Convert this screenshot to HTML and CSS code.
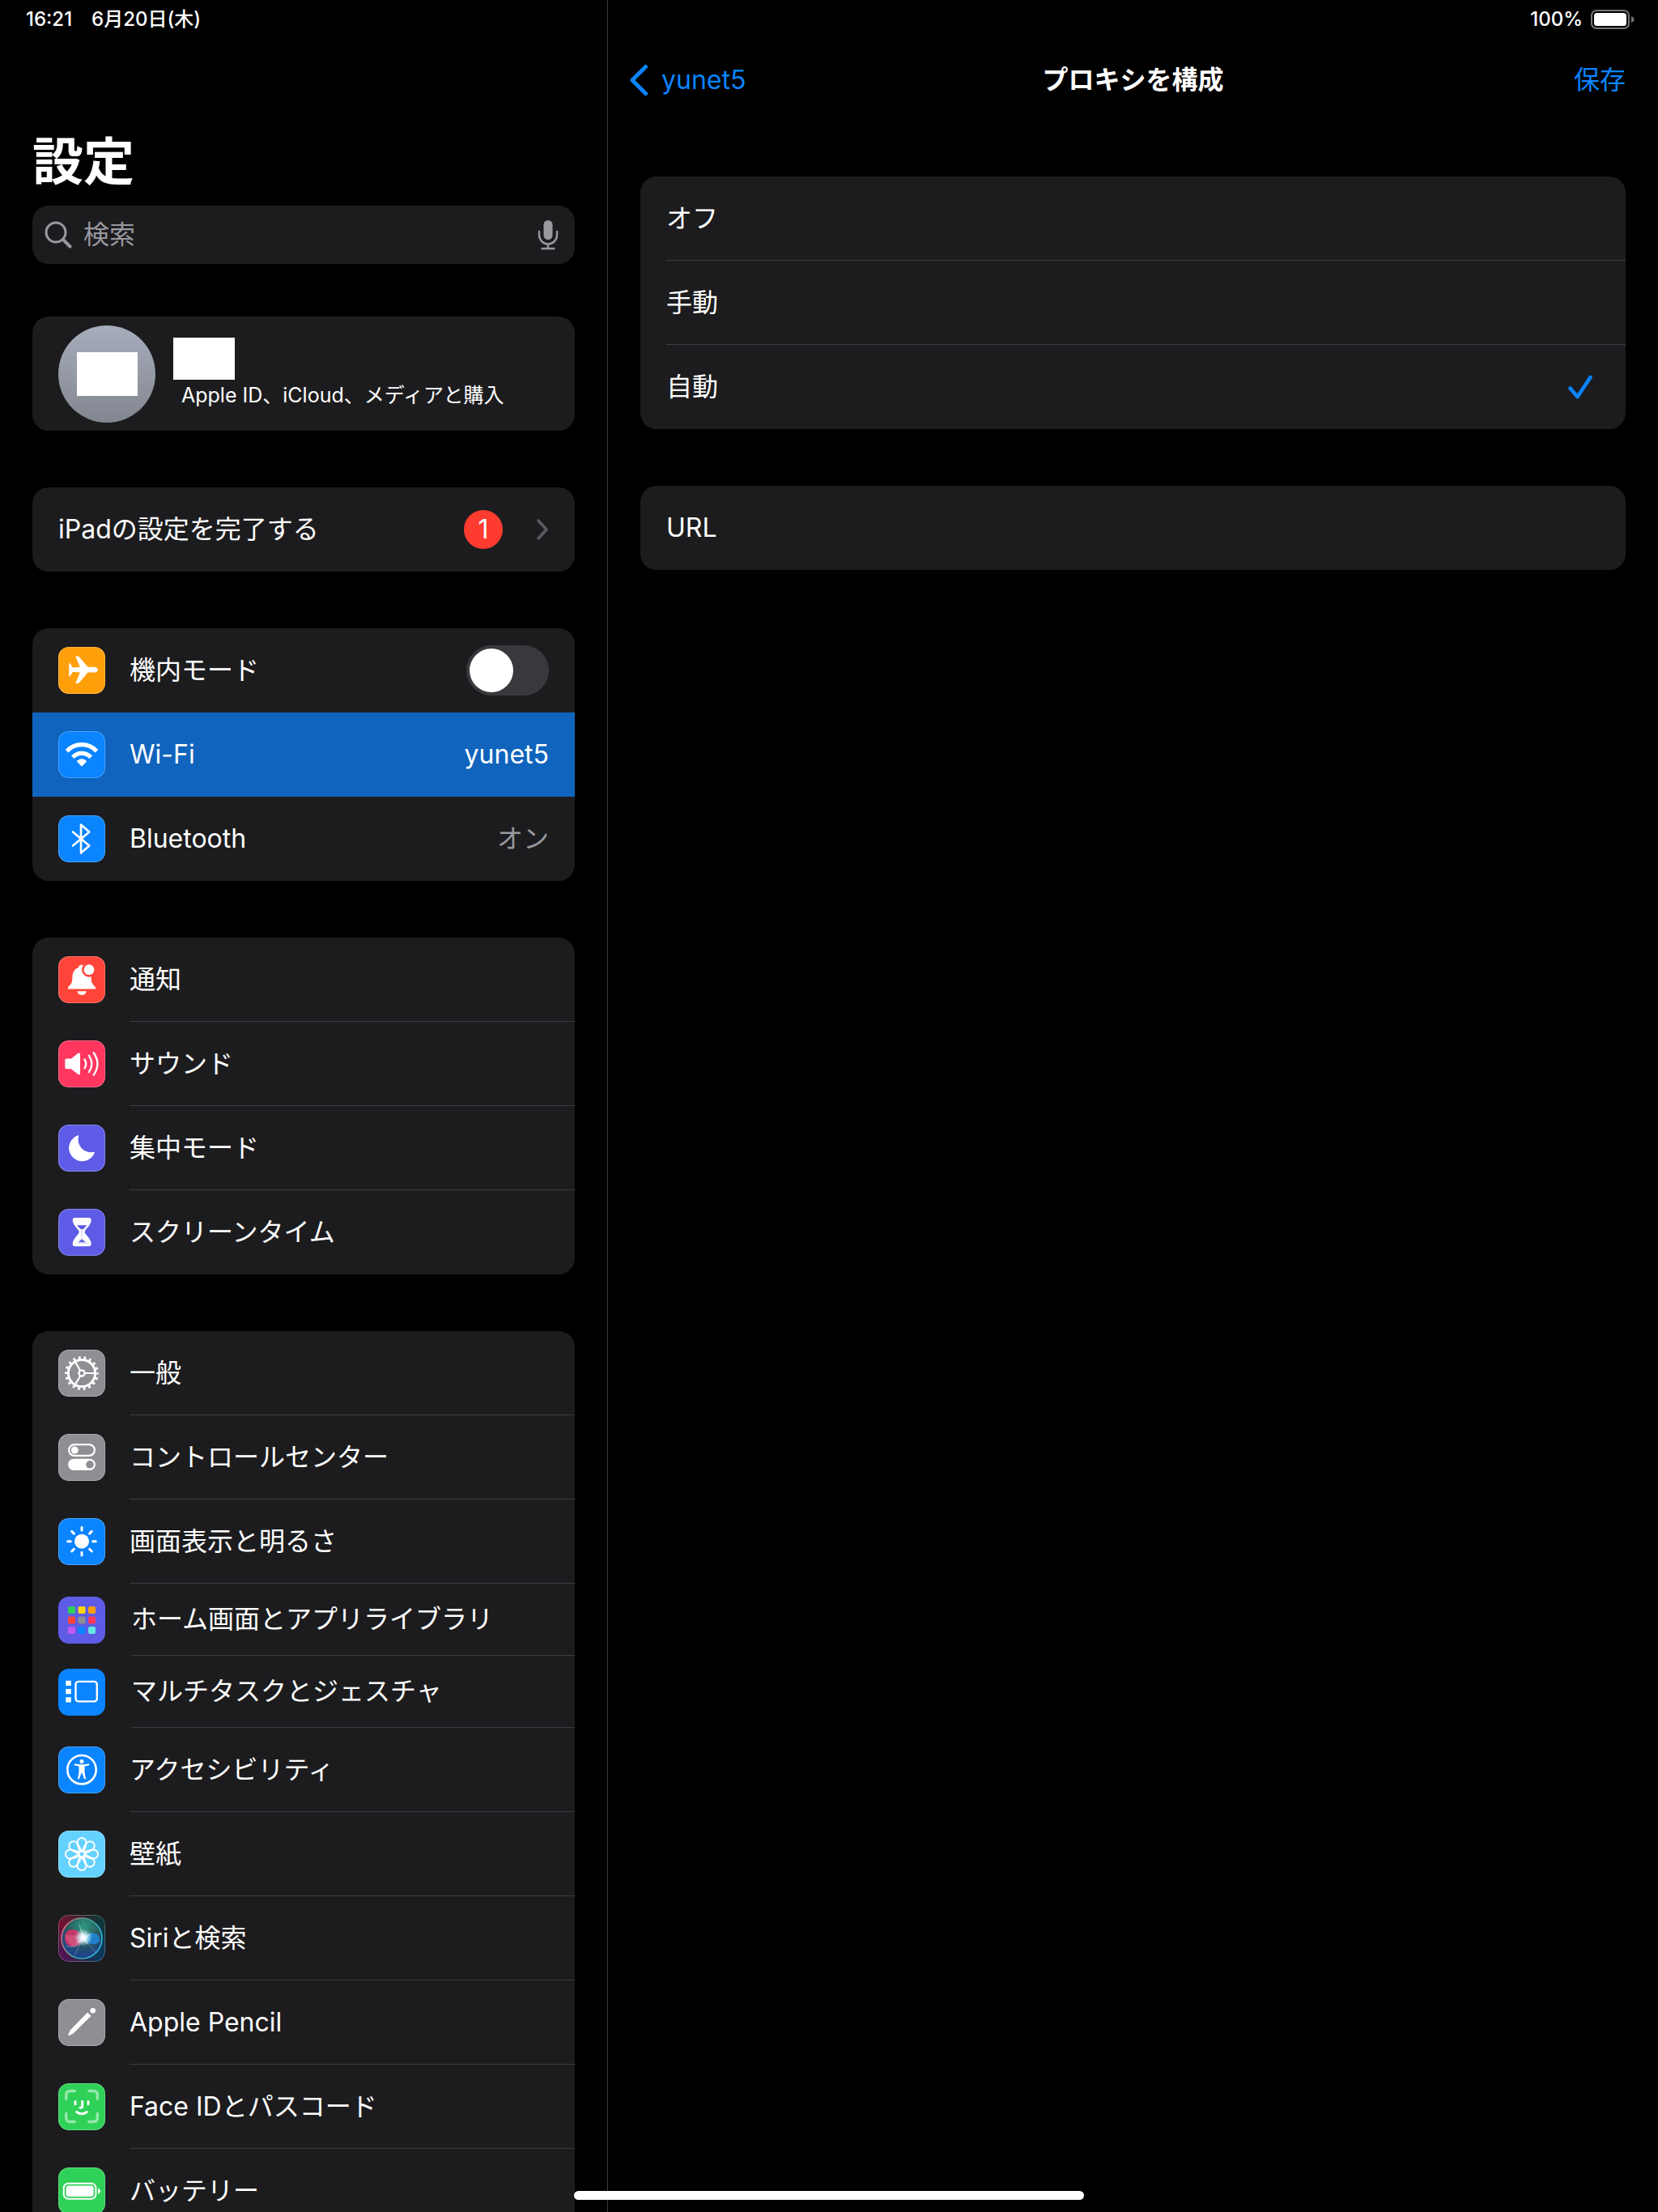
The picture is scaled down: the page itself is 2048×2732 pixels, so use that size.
FILE: index.html
```html
<!DOCTYPE html>
<html lang="ja">
<head>
<meta charset="utf-8">
<meta name="viewport" content="width=device-width">
<title>設定</title>
<link rel="stylesheet" href="styles.css">
</head>
<body>
<div class="split">
  <aside class="sidebar">
    <div class="status status-left"><span>16:21</span><span>6月20日(木)</span></div>
    <h1 class="title">設定</h1>

    <label class="search">
      <svg class="search-glass" viewBox="0 0 34 34" aria-hidden="true"><circle cx="14" cy="14" r="12" fill="none" stroke="currentColor" stroke-width="3"/><path d="M23 23l8.500 8.500" stroke="currentColor" stroke-width="4" stroke-linecap="round"/></svg>
      <input class="search-input" type="search" placeholder="検索" aria-label="検索">
      <svg class="search-mic" viewBox="0 0 26 38" aria-hidden="true"><rect x="7.500" y="1" width="11" height="24" rx="5.500" fill="currentColor"/><path d="M2 15v4a11 11.500 0 0 0 22 0v-4M13 30.500V36M5.500 36h15" fill="none" stroke="currentColor" stroke-width="2.400" stroke-linecap="round"/></svg>
    </label>

    <a class="card profile" href="#account">
      <span class="avatar"><span class="avatar-mask"></span></span>
      <span class="profile-text"><span class="name-mask"></span><span class="profile-note">Apple ID、iCloud、メディアと購入</span></span>
    </a>

    <a class="card row row-plain" href="#setup">
      <span class="label">iPadの設定を完了する</span>
      <span class="badge">1</span>
      <svg class="chevron" viewBox="0 0 16 28" aria-hidden="true"><path d="M3 3l10 11L3 25" fill="none" stroke="currentColor" stroke-width="3.600" stroke-linecap="round" stroke-linejoin="round"/></svg>
    </a>

    <nav class="card">
      <label class="row" for="airplane">
        <svg class="icon orange" viewBox="0 0 58 58" aria-hidden="true"><path fill="#fff" d="M49 28.200c0 2-3 3.400-6 3.400h-6.500L26 44q-1 1-2.500 1h-2.300l5.600-13.500-8.800-.6-3.500 5q-.6.800-1.300.8V19.700q.700 0 1.300.8l3.500 5 8.800-.6-5.600-13.500h2.300q1.500 0 2.500 1l10.500 12.400H43c3 0 6 1.400 6 3.400z"/></svg>
        <span class="body"><span class="label">機内モード</span><input class="switch" type="checkbox" id="airplane"></span>
      </label>
      <a class="row selected" href="#wifi">
        <svg class="icon blue" viewBox="0 0 58 58" aria-hidden="true"><g fill="none" stroke="#fff" stroke-width="5.200"><path d="M10.600 24.800a25 25 0 0 1 36.800 0"/><path d="M17.800 32.200a15.500 15.500 0 0 1 22.400 0"/></g><path d="M24 37.300q5-3.800 10 0l-5 5z" fill="#fff" stroke="#fff" stroke-width="2" stroke-linejoin="round"/></svg>
        <span class="body"><span class="label">Wi-Fi</span><span class="value">yunet5</span></span>
      </a>
      <a class="row" href="#bluetooth">
        <svg class="icon blue" viewBox="0 0 58 58" aria-hidden="true"><path d="M18 20.500l20.300 17-10.300 9V11.500l10.300 9-20.300 17" fill="none" stroke="#fff" stroke-width="2.600" stroke-linecap="round" stroke-linejoin="round"/></svg>
        <span class="body"><span class="label">Bluetooth</span><span class="value">オン</span></span>
      </a>
    </nav>

    <nav class="card lined">
      <a class="row" href="#notifications">
        <svg class="icon red" viewBox="0 0 58 58" aria-hidden="true"><path fill="#fff" d="M13 40.600c-1.700 0-1.400-2.200 0-3.400 3.500-3.200 4.200-5.200 4.400-11.200.2-6.500 3.100-10.500 7.400-12 .7-2.500 2.200-3.600 4.200-3.600s3.500 1.100 4.200 3.600c4.300 1.500 7.200 5.500 7.400 12 .2 6 .9 8 4.400 11.200 1.400 1.200 1.700 3.400 0 3.400zM23.300 43.200h11.600c-.8 3-3 4.700-5.800 4.700s-5-1.700-5.800-4.700z"/><circle cx="38" cy="16.700" r="9" fill="#ff453a"/><circle cx="38" cy="16.700" r="6.400" fill="#fff"/></svg>
        <span class="body"><span class="label">通知</span></span>
      </a>
      <a class="row" href="#sounds">
        <svg class="icon pink" viewBox="0 0 58 58" aria-hidden="true"><path fill="#fff" d="M10.300 22.500H16l8.500-6.700q2.500-1.300 2.500 1.700v22.800q0 3-2.500 1.700L16 35.300h-5.700q-2 0-2-2v-8.800q0-2 2-2z"/><path d="M32.500 23.500q3.400 5.400 0 10.800M38 18.800q6.600 10.100 0 20.200M43.700 15.200q9.400 13.700 0 27.400" fill="none" stroke="#fff" stroke-width="2.400" stroke-linecap="round"/></svg>
        <span class="body"><span class="label">サウンド</span></span>
      </a>
      <a class="row" href="#focus">
        <svg class="icon indigo" viewBox="0 0 58 58" aria-hidden="true"><path fill="#fff" stroke="#fff" stroke-linejoin="round" d="M24.600 13.600A16 16 0 1 0 44.600 34.300 16.700 16.700 0 0 1 24.600 13.600z"/></svg>
        <span class="body"><span class="label">集中モード</span></span>
      </a>
      <a class="row" href="#screentime">
        <svg class="icon indigo" viewBox="0 0 58 58" aria-hidden="true"><path fill="#fff" fill-rule="evenodd" d="M20.500 11h17.400q3 0 2.800 3c-.6 7.500-8 11-8 14.600s7.400 7.100 8 14.600q.2 3-2.800 3H20.500q-3 0-2.800-3c.6-7.500 8-11 8-14.600s-7.400-7.100-8-14.600q-.2-3 2.800-3zM23 20.300q2 2.600 4.600 4.700.7.600.7 1.600v8.400q0 1-.8 1.600Q23 40 21.600 43h15.200q-1.400-3-5.900-6.400-.8-.6-.8-1.600v-8.400q0-1 .7-1.600 2.600-2.100 4.600-4.700z"/><path d="M29.200 25v10c0 3-5.700 4.500-6.400 7h12.800c-.7-2.500-6.400-4-6.400-7" fill="none" stroke="#fff" stroke-width="1.600"/></svg>
        <span class="body"><span class="label">スクリーンタイム</span></span>
      </a>
    </nav>

    <nav class="card lined">
      <a class="row" href="#general">
        <svg class="icon gray" viewBox="0 0 58 58" aria-hidden="true"><g fill="none" stroke="#fff"><circle cx="29" cy="29" r="19.300" stroke-width="3.400" stroke-dasharray="2.800 3.937" stroke-dashoffset="1.400"/><circle cx="29" cy="29" r="16.600" stroke-width="3"/><circle cx="29" cy="29" r="3.600" stroke-width="2.400"/><path d="M33 29h12M27 25.500L21 15.100M27 32.500l-6 10.400" stroke-width="2.200"/></g></svg>
        <span class="body"><span class="label">一般</span></span>
      </a>
      <a class="row" href="#control">
        <svg class="icon gray" viewBox="0 0 58 58" aria-hidden="true"><rect x="13.100" y="13.100" width="31.800" height="13.800" rx="6.900" fill="none" stroke="#fff" stroke-width="2.200"/><circle cx="20.300" cy="20" r="4.500" fill="#fff"/><rect x="12" y="30.700" width="34" height="14.300" rx="7.150" fill="#fff"/><circle cx="39" cy="37.800" r="4.800" fill="#8e8e93"/></svg>
        <span class="body"><span class="label">コントロールセンター</span></span>
      </a>
      <a class="row" href="#display">
        <svg class="icon blue" viewBox="0 0 58 58" aria-hidden="true"><circle cx="29" cy="28.700" r="9" fill="#fff"/><path d="M29 11.300v3.700M29 42.300V46M11.600 28.700h3.700M42.600 28.700h3.700M16.700 16.400l2.700 2.700M38.600 38.300l2.700 2.700M41.300 16.400l-2.700 2.700M19.400 38.300L16.700 41" stroke="#fff" stroke-width="3" stroke-linecap="round"/></svg>
        <span class="body"><span class="label">画面表示と明るさ</span></span>
      </a>
      <a class="row compact" href="#home">
        <svg class="icon indigo" viewBox="0 0 58 58" aria-hidden="true"><rect x="12" y="12" width="9" height="9" rx="2" fill="#30d158"/><rect x="24.500" y="12" width="9" height="9" rx="2" fill="#ffd60a"/><rect x="37" y="12" width="9" height="9" rx="2" fill="#ff9f0a"/><rect x="12" y="24.500" width="9" height="9" rx="2" fill="#ff453a"/><rect x="24.500" y="24.500" width="9" height="9" rx="2" fill="#8e8e93"/><rect x="37" y="24.500" width="9" height="9" rx="2" fill="#ff375f"/><rect x="12" y="37" width="9" height="9" rx="2" fill="#bf5af2"/><rect x="24.500" y="37" width="9" height="9" rx="2" fill="#0a84ff"/><rect x="37" y="37" width="9" height="9" rx="2" fill="#63e6e2"/></svg>
        <span class="body"><span class="label">ホーム画面とアプリライブラリ</span></span>
      </a>
      <a class="row compact" href="#multitasking">
        <svg class="icon blue" viewBox="0 0 58 58" aria-hidden="true"><path fill="#fff" d="M9.300 14.700h6.500V21H9.300zM9.300 25h6.500v6.300H9.300zM9.300 35.300h6.500v6.300H9.300z"/><rect x="21.500" y="15.900" width="26.300" height="24.500" rx="3.500" fill="none" stroke="#fff" stroke-width="2.400"/></svg>
        <span class="body"><span class="label">マルチタスクとジェスチャ</span></span>
      </a>
      <a class="row" href="#accessibility">
        <svg class="icon blue" viewBox="0 0 58 58" aria-hidden="true"><circle cx="29" cy="28.700" r="17.700" fill="none" stroke="#fff" stroke-width="2.600"/><circle cx="29" cy="18.600" r="2.500" fill="#fff"/><path fill="#fff" stroke="#fff" stroke-width="1" stroke-linejoin="round" d="M20 21.800l7 1h4l7-1v1l-6 1.400v7.300l1.500 8.500h-1L29.600 32h-1.200l-2.900 8h-1l1.500-8.500v-7.300l-6-1.400z"/></svg>
        <span class="body"><span class="label">アクセシビリティ</span></span>
      </a>
      <a class="row" href="#wallpaper">
        <svg class="icon sky" viewBox="0 0 58 58" aria-hidden="true"><defs><path id="petal" d="M29 32.500C27.500 26 23.500 20 23.500 14.500a5.500 5.500 0 0 1 11 0C34.500 20 30.500 26 29 32.500z"/></defs><g fill="none" stroke="#fff" stroke-width="2"><use href="#petal"/><use href="#petal" transform="rotate(45 29 29)"/><use href="#petal" transform="rotate(90 29 29)"/><use href="#petal" transform="rotate(135 29 29)"/><use href="#petal" transform="rotate(180 29 29)"/><use href="#petal" transform="rotate(225 29 29)"/><use href="#petal" transform="rotate(270 29 29)"/><use href="#petal" transform="rotate(315 29 29)"/></g><circle cx="29" cy="29" r="2.400" fill="#64d2ff"/></svg>
        <span class="body"><span class="label">壁紙</span></span>
      </a>
      <a class="row" href="#siri">
        <svg class="icon siri" viewBox="0 0 58 58" aria-hidden="true">
          <defs>
            <linearGradient id="siri-ring" x1="0" y1="0.300" x2="1" y2="0.700"><stop offset="0" stop-color="#e06a80"/><stop offset=".5" stop-color="#3fa890"/><stop offset="1" stop-color="#2fb4e8"/></linearGradient>
            <radialGradient id="siri-ball" cx=".55" cy=".2" r=".85"><stop offset="0" stop-color="#2f9a80"/><stop offset=".5" stop-color="#26545e"/><stop offset="1" stop-color="#1b3f9a"/></radialGradient>
            <radialGradient id="siri-glow"><stop offset="0" stop-color="#fff"/><stop offset=".35" stop-color="#e8fbff" stop-opacity=".9"/><stop offset="1" stop-color="#bff" stop-opacity="0"/></radialGradient>
          </defs>
          <circle cx="29" cy="29" r="25" fill="url(#siri-ball)" stroke="url(#siri-ring)" stroke-width="1.600"/>
          <path d="M31 29C26 15 8 14 8 28s16 16 23 1z" fill="#e8306a" opacity=".8"/>
          <path d="M9 25c3 16 17 20 24 4-5-5-13-3-24-4z" fill="#ee7f9c" opacity=".35"/>
          <path d="M31 29c7-10 20-7 20 1s-14 9-20-1z" fill="#1f8df0" opacity=".75"/>
          <path d="M32 30l14 16M30 30L20 50M9 38q12 6 22-9" stroke="#8a9be0" stroke-width="1" fill="none" opacity=".6"/>
          <circle cx="31" cy="28" r="11" fill="url(#siri-glow)"/>
          <path d="M25 9l7 17 12-4-11 7 5 8-8-5-9 4 8-8z" fill="#fff" opacity=".35"/>
        </svg>
        <span class="body"><span class="label">Siriと検索</span></span>
      </a>
      <a class="row" href="#pencil">
        <svg class="icon gray" viewBox="0 0 58 58" aria-hidden="true"><path fill="#fff" d="M36.200 16.500l4.300 4.300-22 21.800-5.200 2.300q-1.300.2-1-1l2.300-5.300z"/><circle cx="42.700" cy="14.200" r="3.300" fill="#fff"/></svg>
        <span class="body"><span class="label">Apple Pencil</span></span>
      </a>
      <a class="row" href="#faceid">
        <svg class="icon green" viewBox="0 0 58 58" aria-hidden="true"><g fill="none" stroke="#fff" stroke-linecap="round"><path opacity=".5" stroke-width="3.400" d="M9.700 19.500v-5q0-5 5-5h5.500M37.800 9.500h5.500q5 0 5 5v5M48.300 37.500v5q0 5-5 5h-5.500M20.200 47.500h-5.500q-5 0-5-5v-5"/><path stroke-width="3" d="M21 22.500v3.200M37 22.500v3.200M29.700 22.300v6q0 2-2.700 2M22.800 35.500q6.200 4.600 12.400 0"/></g></svg>
        <span class="body"><span class="label">Face IDとパスコード</span></span>
      </a>
      <a class="row" href="#battery">
        <svg class="icon green" viewBox="0 0 58 58" aria-hidden="true"><rect x="6.800" y="19.700" width="39.600" height="19" rx="5.500" fill="none" stroke="#fff" stroke-width="2"/><rect x="9.600" y="22.400" width="34" height="13.600" rx="3" fill="#fff"/><path d="M49 25.400q3 1.200 3 3.800t-3 3.800z" fill="#fff"/></svg>
        <span class="body"><span class="label">バッテリー</span></span>
      </a>
    </nav>
  </aside>

  <main class="detail">
    <div class="status status-right">
      <span>100%</span>
      <svg class="battery" viewBox="0 0 54 24" aria-hidden="true"><rect x="1" y="1" width="46" height="22" rx="6" fill="none" stroke="#757575" stroke-width="2"/><rect x="4" y="4" width="40" height="16" rx="3.500" fill="#fff"/><path d="M50 8q3.500 1.500 3.500 4T50 16z" fill="#757575"/></svg>
    </div>
    <header class="navbar">
      <a class="back" href="#wifi"><svg class="back-arrow" viewBox="0 0 24 40" aria-hidden="true"><path d="M20.500 3.500L4 20l16.500 16.500" fill="none" stroke="currentColor" stroke-width="5" stroke-linecap="round" stroke-linejoin="round"/></svg>yunet5</a>
      <h2 class="nav-title">プロキシを構成</h2>
      <button class="save" type="button">保存</button>
    </header>
    <form class="form">
      <div class="card lined" role="radiogroup" aria-label="プロキシを構成">
        <label class="row option"><span class="body"><span class="label">オフ</span><input class="radio" type="radio" name="proxy"></span></label>
        <label class="row option"><span class="body"><span class="label">手動</span><input class="radio" type="radio" name="proxy"></span></label>
        <label class="row option"><span class="body"><span class="label">自動</span><input class="radio" type="radio" name="proxy" checked><svg class="check" viewBox="0 0 30 30" aria-hidden="true"><path d="M2.500 16.500l9 10.500L27.500 3" fill="none" stroke="currentColor" stroke-width="4.600" stroke-linecap="round" stroke-linejoin="round"/></svg></span></label>
      </div>
      <div class="card row row-plain">
        <label for="url">URL</label>
        <input class="url-input" id="url" type="url">
      </div>
    </form>
  </main>
</div>
<div class="home-indicator"></div>
</body>
</html>
```
FILE: styles.css
```css
* {
  box-sizing: border-box;
}

body {
  margin: 0;
  background: #000;
  color: #fff;
  font-family: Inter, "Noto Sans CJK JP", sans-serif;
  font-size: 32px;
  line-height: 48px;
}

a {
  color: inherit;
  text-decoration: none;
}

input,
button {
  margin: 0;
  padding: 0;
  border: 0;
  background: none;
  color: inherit;
  font: inherit;
  appearance: none;
  outline: none;
}

/* Two panes side by side */
.split {
  display: flex;
  height: 100vh;
  overflow: hidden;
}

.sidebar {
  flex: 0 0 751px;
  padding: 0 40px;
  border-right: 1px solid #3a3a3c;
  overflow: hidden;
}

.detail {
  flex: 1;
  min-width: 0;
  padding: 0 40px;
}

/* Status bar */
.status {
  display: flex;
  align-items: center;
  height: 48px;
  font-size: 24px;
  font-weight: 500;
  line-height: 32px;
}

.status-left {
  gap: 24px;
  margin-left: -8px;
}

.status-right {
  justify-content: flex-end;
  gap: 10px;
  margin-right: -11px;
}

.battery {
  width: 54px;
  height: 24px;
}

/* Sidebar head */
.title {
  margin: 111px 0 15px;
  font-size: 63px;
  font-weight: 700;
  line-height: 80px;
}

.search {
  display: flex;
  align-items: center;
  height: 72px;
  padding: 0 20px 0 15px;
  border-radius: 20px;
  background: #1c1c1e;
  color: #98989f;
}

.search-glass {
  width: 34px;
  height: 34px;
  margin-right: 14px;
}

.search-input {
  flex: 1;
  min-width: 0;
}

.search-input::placeholder {
  color: #98989f;
  opacity: 1;
}

.search-mic {
  width: 26px;
  height: 38px;
}

/* Grouped lists */
.card {
  margin-bottom: 70px;
  border-radius: 20px;
  background: #1c1c1e;
  overflow: hidden;
}

.profile {
  display: flex;
  align-items: center;
  gap: 22px;
  height: 141px;
  margin-top: 65px;
  padding: 0 32px;
}

.avatar {
  display: grid;
  place-items: center;
  width: 120px;
  height: 120px;
  border-radius: 50%;
  background: linear-gradient(#a7adbc, #82868f);
}

.avatar-mask {
  width: 75px;
  height: 54px;
  background: #fff;
}

.profile-text {
  display: flex;
  flex-direction: column;
}

.name-mask {
  width: 76px;
  height: 52px;
  background: #fff;
}

.profile-note {
  padding-left: 10px;
  font-size: 25px;
  line-height: 38px;
}

.row {
  display: flex;
  align-items: center;
  gap: 30px;
  height: 104px;
  padding-left: 32px;
}

.row-plain {
  padding-right: 32px;
}

.compact {
  gap: 32px;
  height: 89px;
}

.selected {
  background: #1064bd;
}

.body {
  display: flex;
  flex: 1;
  align-items: center;
  align-self: stretch;
  padding-right: 32px;
}

.lined .row:not(:last-child) .body {
  border-bottom: 1px solid #3d3d41;
}

.label {
  flex: 1;
  white-space: nowrap;
}

.value {
  color: #98989f;
}

.selected .value {
  color: #fff;
}

.badge {
  width: 48px;
  height: 48px;
  border-radius: 50%;
  background: #ff3b30;
  text-align: center;
}

.chevron {
  width: 16px;
  height: 28px;
  margin-left: 11px;
  color: #5a5a5f;
}

.switch {
  width: 102px;
  height: 62px;
  padding: 4px;
  border-radius: 31px;
  background: #39393d;
}

.switch::before {
  content: "";
  display: block;
  width: 54px;
  height: 54px;
  border-radius: 50%;
  background: #fff;
}

.switch:checked {
  background: #30d158;
}

.switch:checked::before {
  margin-left: auto;
}

/* App icons */
.icon {
  flex: none;
  width: 58px;
  height: 58px;
  border-radius: 13px;
  box-shadow: inset 0 0 0 1px rgba(255, 255, 255, 0.25);
}

.compact .icon {
  box-shadow: none;
}

.orange { background-color: #ff9f0a; }
.blue { background-color: #0a84ff; }
.red { background-color: #ff453a; }
.pink { background-color: #ff375f; }
.indigo { background-color: #5e5ce6; }
.gray { background-color: #8e8e93; }
.sky { background-color: #64d2ff; }
.green { background-color: #30d158; }

.siri {
  background:
    radial-gradient(circle at 0 100%, #5a0f5c, transparent 60%),
    radial-gradient(circle at 100% 100%, #0c3a66, transparent 70%),
    radial-gradient(circle at 0 20%, #7a1030, transparent 70%),
    #0d3530;
}

/* Detail pane */
.navbar {
  display: grid;
  grid-template-columns: 1fr auto 1fr;
  align-items: center;
  height: 102px;
  margin-bottom: 68px;
}

.back {
  display: flex;
  align-items: center;
  gap: 16px;
  margin-left: -14px;
  color: #0a84ff;
}

.back-arrow {
  width: 24px;
  height: 40px;
}

.nav-title {
  margin: 0;
  font-size: 32px;
  font-weight: 700;
}

.save {
  justify-self: end;
  color: #0a84ff;
}

.option .body {
  padding-right: 41px;
}

.radio {
  width: 0;
  height: 0;
}

.check {
  width: 30px;
  height: 30px;
  color: #0a84ff;
}

.url-input {
  flex: 1;
  min-width: 0;
}

.home-indicator {
  position: fixed;
  bottom: 15px;
  left: 50%;
  width: 630px;
  height: 11px;
  border-radius: 6px;
  background: #fff;
  transform: translateX(-50%);
}
```
